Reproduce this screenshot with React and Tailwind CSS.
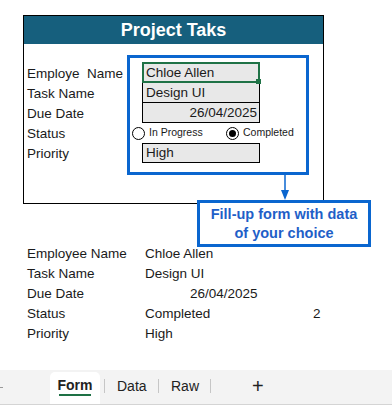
import React from 'react';

const FONT = { fontFamily: '"Liberation Sans", Arial, sans-serif' };

const labels = ['Employe  Name', 'Task Name', 'Due Date', 'Status', 'Priority'];

const Radio = ({ checked }) => (
  <span className="relative flex h-[13px] w-[13px] items-center justify-center rounded-full border border-black bg-white">
    {checked && <span className="h-[7px] w-[7px] rounded-full bg-black" />}
  </span>
);

const SheetTabs = () => (
  <div className="mt-auto flex h-[35px] items-end border-b border-[#d4d4d4] bg-[#f3f3f3] text-[14px] text-[#222]">
    <div className="flex h-full w-[50px] items-center">
      <span className="h-px w-[3px] bg-[#999]" />
    </div>
    {/* active tab */}
    <div className="relative flex h-[32px] w-[50px] flex-col items-center rounded-t-[5px] bg-white pt-[4px]">
      <span className="font-semibold leading-[18px]">Form</span>
      <span className="absolute bottom-[8px] h-[2px] w-[32px] bg-[#1e7145]" />
    </div>
    <div className="flex h-[32px] items-center pb-[4px]">
      <span className="ml-[4px] h-[14px] w-px bg-[#c6c6c6]" />
      <span className="ml-[12px] w-[41px]">Data</span>
      <span className="h-[14px] w-px bg-[#c6c6c6]" />
      <span className="ml-[12px] w-[39px]">Raw</span>
      <span className="h-[14px] w-px bg-[#c6c6c6]" />
      <span className="ml-[41px] text-[20px] font-light leading-none">+</span>
    </div>
  </div>
);

export default function App() {
  return (
    <div className="relative flex h-[405px] w-[392px] flex-col overflow-hidden bg-white text-[#1a1a1a]" style={FONT}>
      {/* form card */}
      <div className="ml-[23px] mt-[15px] h-[189px] w-[301px] border border-black">
        <div className="flex h-[28px] items-center justify-center bg-[#165f7d] text-[18px] font-bold text-white">
          Project Taks
        </div>
        <div className="flex">
          <div className="ml-[3px] mt-[20px] w-[100px] text-[13.5px]">
            {labels.map((l) => (
              <div key={l} className="h-[20px] whitespace-pre leading-[20px]">{l}</div>
            ))}
          </div>
          <div className="mt-[11px] h-[120px] w-[182px] border-[3px] border-[#0a66cf] pl-[2px] pt-[4px] text-[13.5px]">
            <div className="ml-[10px] w-[118px]">
              <div className="relative h-[21px] border-2 border-[#1f7246] bg-[#e8e8e8] pl-[2px] leading-[17px]">
                Chloe Allen
                <span className="absolute -bottom-[3px] -right-[3px] h-[5px] w-[5px] bg-[#1f7246]" />
              </div>
              <div className="h-[20px] border-x border-b border-black bg-[#e8e8e8] pl-[3px] leading-[19px]">Design UI</div>
              <div className="h-[20px] border-x border-b border-black bg-[#e8e8e8] pr-[2px] text-right leading-[19px]">26/04/2025</div>
            </div>
            <div className="flex h-[20px] items-center text-[10.5px]">
              <Radio />
              <span className="ml-[4px] w-[77px]">In Progress</span>
              <Radio checked />
              <span className="ml-[4px]">Completed</span>
            </div>
            <div className="ml-[10px] h-[20px] w-[118px] border border-black bg-[#e8e8e8] pl-[3px] leading-[18px]">High</div>
          </div>
        </div>
      </div>

      {/* arrow */}
      <svg className="absolute left-[280px] top-[175px]" width="10" height="26" viewBox="0 0 10 26">
        <line x1="5" y1="0" x2="5" y2="20" stroke="#0a66cf" strokeWidth="1.5" />
        <path d="M1 15 L5 25 L9 15 Z" fill="#0a66cf" />
      </svg>

      {/* callout */}
      <div className="absolute left-[197px] top-[200px] flex h-[47px] w-[174px] flex-col items-center justify-center border-[3px] border-[#0a66cf] bg-white text-[14.5px] font-bold leading-[19px] text-[#1f5fc8]">
        <span>Fill-up form with data</span>
        <span>of your choice</span>
      </div>

      {/* captured data */}
      <div className="ml-[27px] mt-[40px] text-[13.5px]">
        {[
          ['Employee Name', 'Chloe Allen'],
          ['Task Name', 'Design UI'],
          ['Due Date', ''],
          ['Status', 'Completed'],
          ['Priority', 'High'],
        ].map(([k, v], i) => (
          <div key={k} className="flex h-[20px] items-center">
            <span className="w-[118px]">{k}</span>
            {i === 2 ? (
              <span className="ml-[45px]">26/04/2025</span>
            ) : (
              <span className="w-[168px]">{v}</span>
            )}
            {i === 3 && <span>2</span>}
          </div>
        ))}
      </div>

      <SheetTabs />
    </div>
  );
}
